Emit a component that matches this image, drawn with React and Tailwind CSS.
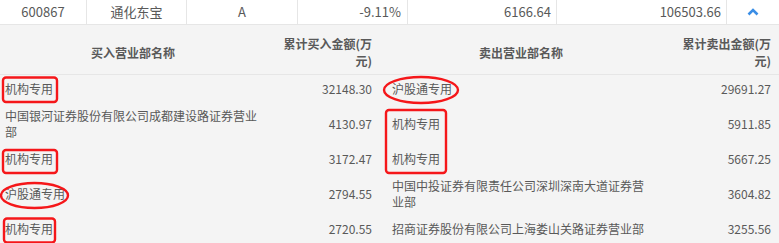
import React from 'react';

const summary = [
  { text: '600867', w: 'w-[87px]', align: 'justify-center' },
  { text: '通化东宝', w: 'w-[100px]', align: 'justify-center' },
  { text: 'A', w: 'w-[111px]', align: 'justify-center' },
  { text: '-9.11%', w: 'w-[110px]', align: 'justify-end pr-[6px]' },
  { text: '6166.64', w: 'w-[149px]', align: 'justify-end pr-[5px]' },
  { text: '106503.66', w: 'w-[170px]', align: 'justify-end pr-[5px]' },
];

const rows = [
  { buy: '机构专用', buyAmt: '32148.30', sell: '沪股通专用', sellAmt: '29691.27', tall: false },
  { buy: '中国银河证券股份有限公司成都建设路证券营业部', buyAmt: '4130.97', sell: '机构专用', sellAmt: '5911.85', tall: true },
  { buy: '机构专用', buyAmt: '3172.47', sell: '机构专用', sellAmt: '5667.25', tall: false },
  { buy: '沪股通专用', buyAmt: '2794.55', sell: '中国中投证券有限责任公司深圳深南大道证券营业部', sellAmt: '3604.82', tall: true },
  { buy: '机构专用', buyAmt: '2720.55', sell: '招商证券股份有限公司上海娄山关路证券营业部', sellAmt: '3255.56', tall: false },
];

export default function App() {
  return (
    <div
      className="relative w-[779px] h-[243px] overflow-hidden bg-[#f4f4f4] text-[12px] text-[#595959]"
      style={{ fontFamily: '"Noto Sans CJK SC", "Noto Sans", sans-serif' }}
    >
      {/* summary row */}
      <div className="flex h-[25px] bg-white border-b border-[#e6e6e6]">
        {summary.map((c, i) => (
          <div key={i} className={`${c.w} ${c.align} flex items-center border-r border-[#e6e6e6] text-[13px]`}>
            {c.text}
          </div>
        ))}
        <div className="flex-1 flex items-center justify-center">
          <svg width="12" height="8" viewBox="0 0 12 8">
            <path d="M1.5 6.5 L6 2 L10.5 6.5" fill="none" stroke="#3a8ee6" strokeWidth="2.6" />
          </svg>
        </div>
      </div>

      {/* header */}
      <div className="grid grid-cols-[266px_122px_266px_125px] h-[50px] border-b border-[#e6e6e6] font-bold leading-[17px]">
        <div className="flex items-center justify-center pt-[5px]">买入营业部名称</div>
        <div className="flex items-center justify-end pr-[16px] pt-[5px]">
          <span className="inline-block w-[94px] text-right">累计买入金额(万元)</span>
        </div>
        <div className="flex items-center justify-center pt-[5px]">卖出营业部名称</div>
        <div className="flex items-center justify-end pr-[8px] pt-[5px]">
          <span className="inline-block w-[94px] text-right">累计卖出金额(万元)</span>
        </div>
      </div>

      {/* body */}
      {rows.map((r, i) => (
        <div key={i} className="grid grid-cols-[266px_122px_266px_125px] leading-4">
          <div className="flex items-center pl-[5px] pr-2 py-[5.5px]">{r.buy}</div>
          <div className="flex items-center justify-end pr-[16px]">{r.buyAmt}</div>
          <div className="flex items-center pl-[4px] pr-2 py-[5.5px]">{r.sell}</div>
          <div className="flex items-center justify-end pr-[8px]">{r.sellAmt}</div>
        </div>
      ))}

      {/* red annotations */}
      <svg className="absolute left-0 top-0 pointer-events-none" width="779" height="243" viewBox="0 0 779 243">
        <g fill="none" stroke="#f5171a" strokeWidth="2.4">
          <rect x="3" y="77.5" width="54" height="24.5" rx="3" />
          <rect x="3" y="150" width="54" height="23" rx="3" />
          <rect x="4" y="218.5" width="51" height="24" rx="3" />
          <rect x="386" y="110" width="60" height="63" rx="3" />
          <ellipse cx="34.5" cy="195.5" rx="33.5" ry="12.5" />
          <ellipse cx="421" cy="90" rx="37" ry="13" />
        </g>
      </svg>
    </div>
  );
}
